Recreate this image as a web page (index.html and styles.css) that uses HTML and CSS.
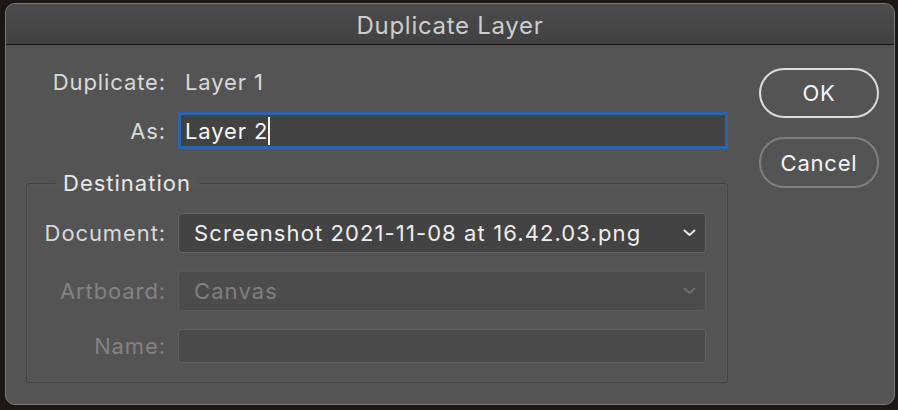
FILE: index.html
```html
<!DOCTYPE html>
<html>
<head>
<meta charset="utf-8">
<link rel="stylesheet" href="styles.css">
</head>
<body>
<div class="dialog">
  <div class="titlebar">Duplicate Layer</div>
  <div class="content">
    <div class="main">
      <div class="row row-dup">
        <span class="label">Duplicate:</span>
        <span class="value">Layer 1</span>
      </div>
      <div class="row row-as">
        <span class="label">As:</span>
        <div class="text-input focused"><span class="typed">Layer 2</span><span class="caret"></span></div>
      </div>
      <fieldset class="group">
        <legend>Destination</legend>
        <div class="row row-sel">
          <span class="label">Document:</span>
          <div class="select">
            <span class="sel-text">Screenshot 2021-11-08 at 16.42.03.png</span>
            <svg class="chev" width="13" height="8" viewBox="0 0 13 8"><polyline points="1.5,1.5 6.5,6 11.5,1.5" fill="none" stroke="#e6e6e6" stroke-width="2" stroke-linecap="round" stroke-linejoin="round"/></svg>
          </div>
        </div>
        <div class="row row-sel disabled">
          <span class="label">Artboard:</span>
          <div class="select">
            <span class="sel-text">Canvas</span>
            <svg class="chev" width="13" height="8" viewBox="0 0 13 8"><polyline points="1.5,1.5 6.5,6 11.5,1.5" fill="none" stroke="#6e6e6e" stroke-width="2" stroke-linecap="round" stroke-linejoin="round"/></svg>
          </div>
        </div>
        <div class="row row-name disabled">
          <span class="label">Name:</span>
          <div class="name-input"></div>
        </div>
      </fieldset>
    </div>
    <div class="buttons">
      <div class="btn btn-ok">OK</div>
      <div class="btn btn-cancel">Cancel</div>
    </div>
  </div>
</div>
</body>
</html>
```

FILE: styles.css
```css
html, body {
  margin: 0;
  padding: 0;
}
body {
  width: 898px;
  height: 410px;
  background: #1c1715;
  font-family: "Inter", "Liberation Sans", sans-serif;
  overflow: hidden;
}
.dialog {
  margin: 3px 3px 0 5px;
  width: 888px;
  height: 400px;
  border: 1px solid #7c7c7c;
  border-radius: 10px;
  background: #545454;
  overflow: hidden;
}
.titlebar {
  height: 40px;
  border-bottom: 1px solid #161616;
  background: linear-gradient(#4b4b4b, #414141);
  color: #cdcdcd;
  font-size: 24px;
  letter-spacing: 0.7px;
  line-height: 43px;
  text-align: center;
}
.content {
  display: flex;
  padding: 22px 16px 0 20px;
}
.main {
  width: 702px;
  display: flex;
  flex-direction: column;
}
.row {
  display: flex;
  align-items: center;
  gap: 12px;
}
.label {
  width: 140px;
  flex: none;
  text-align: right;
  font-size: 22px;
  letter-spacing: 0.9px;
  color: #d9d9d9;
}
.value {
  font-size: 22px;
  letter-spacing: 0.9px;
  color: #d9d9d9;
  padding-left: 7px;
}
.row-dup {
  height: 30px;
}
.row-as {
  margin-top: 15px;
  height: 37px;
}
.text-input {
  width: 543px;
  height: 31px;
  border: 3px solid #2b63ad;
  background: #424242;
  display: flex;
  align-items: center;
  padding-left: 4px;
  font-size: 22px;
  letter-spacing: 0.9px;
  color: #f6f6f6;
}
.caret {
  width: 2px;
  height: 28px;
  background: #f0f0f0;
  margin-left: 0;
}
.group {
  margin: 22px 0 0 0;
  padding: 18px 21px 19px 0;
  border: 1px solid #434343;
  box-shadow: inset 0 0 0 1px #5a5a5a;
  border-radius: 3px;
  min-width: 0;
}
.group legend {
  margin-left: 28px;
  padding: 0 8px;
  font-size: 22px;
  letter-spacing: 1px;
  line-height: 24px;
  color: #e8e8e8;
}
.group .label {
  width: 139px;
}
.row-sel {
  height: 40px;
}
.row-sel + .row {
  margin-top: 18px;
}
.select {
  border: 1px solid #646464;
  border-radius: 4px;
  background: #434343;
  display: flex;
  align-items: center;
  justify-content: space-between;
  padding: 0 0 0 15px;
  box-sizing: border-box;
  width: 528px;
  height: 40px;
}
.sel-text {
  font-size: 22px;
  letter-spacing: 1.1px;
  color: #eeeeee;
}
.chev {
  margin-right: 9px;
}
.disabled .label {
  color: #828282;
}
.disabled .select {
  background: #4c4c4c;
  border-color: #5b5b5b;
}
.disabled .sel-text {
  color: #7f7f7f;
}
.row-name {
  height: 34px;
}
.name-input {
  width: 528px;
  height: 34px;
  box-sizing: border-box;
  border: 1px solid #606060;
  border-radius: 2px;
  background: #4a4a4a;
}
.buttons {
  margin-left: 31px;
  display: flex;
  flex-direction: column;
  gap: 19px;
  padding-top: 1px;
}
.btn {
  width: 120px;
  height: 50px;
  box-sizing: border-box;
  border-radius: 25px;
  display: flex;
  align-items: center;
  justify-content: center;
  font-size: 22px;
  letter-spacing: 0.8px;
  color: #f4f4f4;
}
.btn-ok {
  border: 2px solid #dcdcdc;
}
.btn-cancel {
  height: 51px;
  border: 2px solid #7f7f7f;
}
```
